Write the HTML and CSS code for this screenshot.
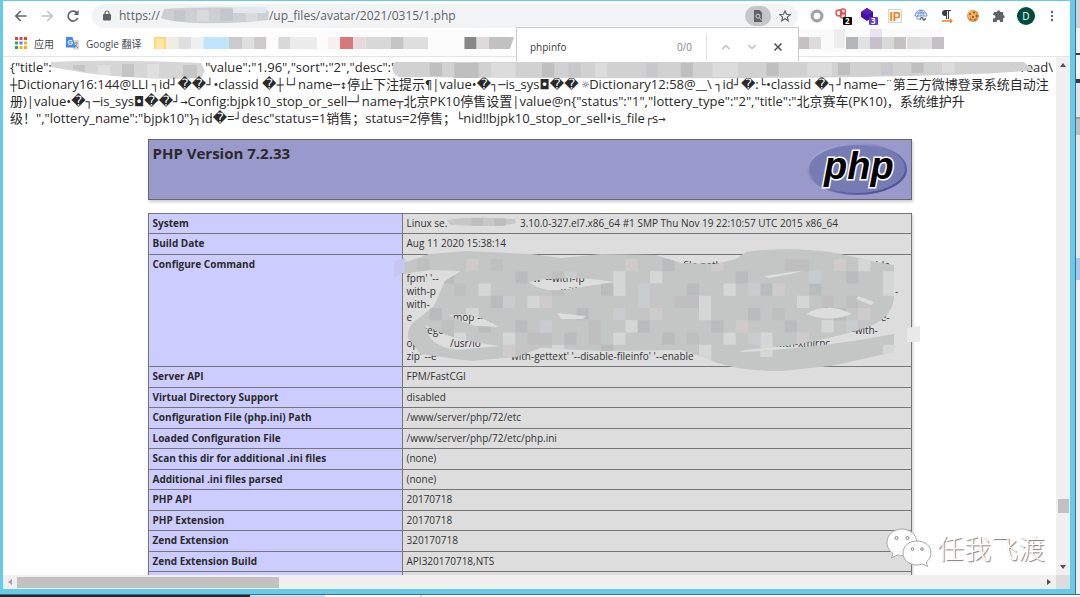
FILE: index.html
```html
<!DOCTYPE html>
<html lang="zh-CN">
<head>
<meta charset="utf-8">
<title>phpinfo()</title>
<link rel="stylesheet" href="styles.css">
</head>
<body>
<div class="desktop">
<div class="window">
  <header class="toolbar">
    <button class="nav" aria-label="后退"><svg width="14" height="14" viewBox="0 0 14 14"><path d="M12.500 7H2M6.800 2L1.800 7l5 5" fill="none" stroke="#5f6368" stroke-width="1.600"/></svg></button>
    <button class="nav" aria-label="前进"><svg width="14" height="14" viewBox="0 0 14 14"><path d="M1.500 7H12M7.200 2l5 5-5 5" fill="none" stroke="#bdc1c6" stroke-width="1.600"/></svg></button>
    <button class="nav" aria-label="重新加载"><svg width="14" height="14" viewBox="0 0 14 14"><path d="M11.700 9A5 5 0 1 1 11 3.900" fill="none" stroke="#5f6368" stroke-width="1.700"/><path d="M12.600 1v5H7.600z" fill="#5f6368"/></svg></button>
    <div class="omnibox">
      <svg class="lock" width="8" height="11" viewBox="0 0 8 11"><path d="M2 5V3a2 2 0 0 1 4 0v2" fill="none" stroke="#5f6368" stroke-width="1.200"/><rect y="4" width="8" height="6.500" rx="1" fill="#5f6368"/></svg>
      <span>https://</span>
      <svg class="host" width="109" height="17" viewBox="0 0 112 17" preserveAspectRatio="none"><path d="M4 2Q40-1 106 1l6 4-1 8Q80 17 38 16 12 15 1 11z" fill="#cdd0d3"/><path d="M14 3h12v11H14zM62 2h13v12H62z" fill="#c4c7ca"/><path d="M38 3h12v11H38zM88 2h12v12H88z" fill="#d8dadc"/><path d="M75 0h34v6H75z" fill="#dfe8ee"/></svg>
      <span>/up_files/avatar/2021/0315/1.php</span>
      <button class="finder" aria-label="在页面中查找"><svg width="12" height="12" viewBox="0 0 12 12"><path d="M2 0h5.500L10 2.500V12H2z" fill="#5f6368"/><circle cx="6" cy="6.200" r="2" fill="none" stroke="#d0d2d4"/><path d="M7.400 7.600L10 10.500" stroke="#d0d2d4"/></svg></button>
      <button class="star" aria-label="收藏"><svg width="12" height="12" viewBox="0 0 12 12"><path d="M6 .9l1.500 3.400 3.700.3-2.800 2.500.8 3.600L6 8.800l-3.200 1.900.8-3.600L.8 4.600l3.700-.3z" fill="none" stroke="#5f6368" stroke-width="1.200"/></svg></button>
    </div>
    <div class="extensions">
      <button aria-label="扩展 1"><svg width="18" height="18" viewBox="0 0 18 18"><circle cx="9" cy="9" r="4.900" fill="#fff" stroke="#a2a2a2" stroke-width="3.200"/></svg></button>
      <button aria-label="扩展 2"><svg width="20" height="18" viewBox="0 0 20 18"><g fill="none" stroke="#d9534f" stroke-width="1.400"><circle cx="6" cy="6" r="3"/><circle cx="10" cy="4.500" r="2.500"/><circle cx="10" cy="8.500" r="2.500"/></g><rect x="10" y="10" width="9" height="8" rx="1" fill="#000"/><text x="12" y="17" class="badge">2</text></svg></button>
      <button aria-label="扩展 3"><svg width="20" height="18" viewBox="0 0 20 18"><path d="M8 1l6 4v5l-6 4-6-4V5z" fill="#4410a6"/><path d="M2 5l6 3 6-3-6-4z" fill="#5920bf"/><rect x="10" y="10" width="9" height="8" rx="1" fill="#6837bd"/><text x="12" y="17" class="badge">3</text></svg></button>
      <button aria-label="扩展 4"><svg width="16" height="16" viewBox="0 0 16 16"><rect x="1.500" y="1.500" width="13" height="13" fill="#fafafa" stroke="#d6d6d6"/><text x="2.500" y="12.500" class="ip">IP</text></svg></button>
      <button aria-label="扩展 5"><svg width="16" height="16" viewBox="0 0 16 16"><g fill="none" stroke="#6b8fdb"><path d="M2 8a6 6 0 0 1 12 0zM5 8C5 6 6 4 8 2c2 2 3 4 3 6M3 5h10M8 2v6M4 8v3h2"/><path d="M7 12c0-3 3-3 3-1s3 1 2-1" stroke="#60656b" stroke-width="1.400"/></g></svg></button>
      <button aria-label="扩展 6"><svg width="16" height="16" viewBox="0 0 16 16"><path d="M12 2H6a3 3 0 0 0 0 6h1v3h1V3h1v8h1V3h2z" fill="#3c4043"/><path d="M3 13h9" stroke="#f08020" stroke-width="1.500"/><path d="M11 10.500l3 2.500-3 2.500z" fill="#f08020"/></svg></button>
      <button aria-label="扩展 7"><svg width="16" height="16" viewBox="0 0 16 16"><circle cx="8" cy="8" r="6" fill="#dc9542"/><circle cx="7" cy="7" r="4.500" fill="#efb260"/><g fill="#8a4a1e"><circle cx="5" cy="6" r=".9"/><circle cx="9" cy="4.500" r=".9"/><circle cx="11.500" cy="8" r=".9"/><circle cx="8" cy="9" r="1"/><circle cx="5.500" cy="11" r=".8"/><circle cx="10" cy="12" r=".8"/></g></svg></button>
      <button aria-label="扩展程序"><svg width="14" height="14" viewBox="0 0 14 14"><path d="M2 3h3a1.700 1.700 0 1 1 3.400 0H11v3a1.700 1.700 0 1 1 0 3.400V13H8a1.700 1.700 0 1 0-3.200 0H1V9.500a1.800 1.800 0 1 0 0-3.400z" fill="#5f6368"/></svg></button>
      <button class="avatar" aria-label="账户">D</button>
      <button aria-label="菜单"><svg width="4" height="14" viewBox="0 0 4 14" fill="#5f6368"><circle cx="2" cy="3" r="1.200"/><circle cx="2" cy="7" r="1.200"/><circle cx="2" cy="11" r="1.200"/></svg></button>
    </div>
  </header>

  <nav class="bookmarks">
    <a href="#apps"><svg width="12" height="12" viewBox="0 0 12 12"><path d="M0 0h3v3H0zM4.500 0h3v3h-3zM9 0h3v3H9z" fill="#e5443a"/><path d="M0 4.500h3v3H0z" fill="#3ba556"/><path d="M4.500 4.500h3v3h-3z" fill="#4285f4"/><path d="M9 4.500h3v3H9zM4.500 9h3v3h-3zM9 9h3v3H9z" fill="#f5b21b"/><path d="M0 9h3v3H0z" fill="#3ba556"/></svg>应用</a>
    <a href="#translate"><svg width="13" height="13" viewBox="0 0 13 13"><path d="M5 3h8v9.500H7z" fill="#d5d8dc"/><path d="M8 6h4M10 5v1M11 7c-1 2-2 3-3 3M9 8l3 3" stroke="#777c82" fill="none" stroke-width=".8"/><path d="M0 0h6.500l3 10.500H0z" fill="#4486f4"/><text x="1.500" y="7.500" class="g">G</text></svg>Google 翻译</a>
    <svg class="hidden-links" viewBox="0 0 358 26" preserveAspectRatio="none">
      <path d="M105 3Q210-3 352 1v25H260Q170 24 105 15z" fill="#fcfcfc"/>
      <path d="M1 7h12v12H1z" fill="#f9d978"/><path d="M3 9h8v10H3z" fill="#fce8a1"/><path d="M13 7h12v12H13z" fill="#f0eee3"/><path d="M25 7h13v12H25zM88 7h12v12H88z" fill="#e0dfdf"/><path d="M38 7h12v12H38z" fill="#edf1f2"/><path d="M50 7h25v12H50z" fill="#c0e4fc"/><path d="M75 7h13v12H75zM100 7h12v12h-12z" fill="#cccaca"/><path d="M124 7h12v12h-12zM210 7h25v12h-25z" fill="#d8d8d8"/><path d="M136 7h26v12h-26z" fill="#ececec"/><path d="M173 7h12v12h-12z" fill="#f9efef"/><path d="M185 7h13v12h-13z" fill="#d7777a"/><path d="M198 7h12v12h-12z" fill="#e7d9da"/><path d="M235 7h13v12h-13z" fill="#c6c5c6"/><path d="M248 7h24v12h-24z" fill="#dedede"/><path d="M308 7h12v12h-12z" fill="#878787"/><path d="M320 7h12v12h-12z" fill="#ded9db"/><path d="M332 7h25l-4 12h-21z" fill="#c1c1c1"/>
    </svg>
    <svg class="hidden-links-end" viewBox="0 0 258 28" preserveAspectRatio="none">
      <path d="M0 0h160v18Q140 24 100 23 40 24 1 20z" fill="#fafafa"/><path d="M52 0h11v19H52z" fill="#ededed"/><path d="M88 0h12v19H88z" fill="#e9e2f2"/><path d="M15 8h12v12H15zM112 8h12v12h-12z" fill="#c5c1c3"/><path d="M27 8h12v12H27zM125 8h13v12h-13z" fill="#dcdcdf"/><path d="M64 8h12v12H64z" fill="#b4b5b8"/><path d="M76 8h12v12H76zM138 8h12v12h-12z" fill="#e2e1e1"/><path d="M88 8h12v12H88z" fill="#c5c1ca"/><path d="M100 8h12v12h-12z" fill="#d9d9d9"/><path d="M150 8h12v12h-12z" fill="#c4c1c4"/>
    </svg>
  </nav>

  <form class="findbar">
    <input type="text" value="phpinfo" aria-label="查找">
    <span class="count">0/0</span>
    <button type="button" aria-label="上一个"><svg width="8" height="6" viewBox="0 0 8 6"><path d="M.5 5L4 1.500 7.500 5" fill="none" stroke="#b8babd" stroke-width="1.300"/></svg></button>
    <button type="button" aria-label="下一个"><svg width="8" height="6" viewBox="0 0 8 6"><path d="M.5 1L4 4.500 7.500 1" fill="none" stroke="#b8babd" stroke-width="1.300"/></svg></button>
    <button type="button" aria-label="关闭"><svg width="8" height="8" viewBox="0 0 8 8"><path d="M.5.5l7 7M7.500.5l-7 7" stroke="#4a4d51" stroke-width="1.500"/></svg></button>
  </form>

  <main class="viewport">
    <div class="page">
      <div class="dump">
        <p><span>{"title":&nbsp;</span><svg class="smear-a" width="154" height="22" viewBox="0 0 154 22"><path d="M0 3Q60 0 150 4l4 8-4 7Q100 22 35 14L0 8z" fill="#d6d6d6"/><path d="M22 6h12v7l-12-3zM71 5h12v13H71zM132 6h14v13h-14z" fill="#c5c5c5"/><path d="M47 6h12v10H47zM96 5h12v14H96z" fill="#e0e0e0"/></svg><span>"value":"1.96","sort":"2","desc":"</span><svg class="smear-b" height="22" viewBox="0 0 652 22" preserveAspectRatio="none"><path d="M4 3H620l10 8-20 2Q470 22 8 18Q-3 12 4 3z" fill="#d1d1d1"/><path d="M38 4h12v13H38zM62 4h24v15H62zM148 4h12v14h-12zM284 4h12v14h-12zM368 4h12v13h-12zM438 4h12v12h-12zM510 4h12v10h-12z" fill="#bfbfc0"/><path d="M98 4h24v14H98zM200 4h12v14h-12zM315 4h25v14h-25zM408 4h24v13h-24zM540 4h12v10h-12z" fill="#dcdcdc"/><path d="M174 4h12v14h-12zM250 4h12v14h-12zM480 4h12v12h-12z" fill="#c8c8ca"/></svg><span class="tail">read\</span></p>
        <p><i>┼</i>Dictionary16:144@LLI <i>┐</i>id<i>┘</i><b>��</b><i>┘</i>•classid <b>�</b><i>┼└┘</i>name<i>─↕</i>停止下注提示<i>¶</i>|value•<b>�</b><i>┐─</i>is_sys<b class="inv">◘</b><b>��</b> <i>☼</i>Dictionary12:58@__\ <i>┐</i>id<i>┘</i><b>�</b>:<i>└</i>•classid <b>�</b><i>┐┘</i>name<i>─</i>¨第三方微博登录系统自动注</p>
        <p>册)|value•<b>�</b><i>┐─</i>is_sys<b class="inv">◘</b><b>��</b><i>┘→</i>Config:bjpk10_stop_or_sell<i>─┘</i>name<i>┬</i>北京PK10停售设置|value@n{"status":"1","lottery_type":"2","title":"北京赛车(PK10)，系统维护升</p>
        <p>级！","lottery_name":"bjpk10"}<i>┐</i>id<b>�</b>=<i>┘</i>desc"status=1销售；status=2停售；<i>└</i>nid‼bjpk10_stop_or_sell•is_file<i>┌</i>s<i>→</i></p>
      </div>

      <section class="banner">
        <h1>PHP Version 7.2.33</h1>
        <svg width="102" height="56" viewBox="0 0 102 56" role="img" aria-label="PHP logo">
          <defs><linearGradient id="rim" x1="0" y1="0" x2="1" y2="1"><stop offset="0" stop-color="#b0b3dc"/><stop offset=".5" stop-color="#7478b4"/><stop offset="1" stop-color="#3e4189"/></linearGradient></defs>
          <ellipse cx="51" cy="27" rx="49" ry="25" fill="#777bb4" stroke="url(#rim)" stroke-width="2"/>
          <text x="18" y="37" class="php">php</text>
        </svg>
      </section>

      <table class="info">
        <tr><th scope="row">System</th><td>Linux se.<svg class="server" width="70" height="10" viewBox="0 0 74 10"><path d="M0 3Q20-1 50 1l22 1 1 4Q60 10 30 9L3 8z" fill="#c7c7c7"/><path d="M26 1h12v8H26zM50 1h12v8H50z" fill="#bdbdbd"/></svg> 3.10.0-327.el7.x86_64 #1 SMP Thu Nov 19 22:10:57 UTC 2015 x86_64</td></tr>
        <tr><th scope="row">Build Date</th><td>Aug 11 2020 15:38:14</td></tr>
        <tr><th scope="row">Configure Command</th><td class="command">&nbsp;<br>fpm' '--<br>with-p<br>with-<br>e<br>&nbsp;<br>op<br>zip' --e
          <svg class="redaction" width="530" height="120" viewBox="0 0 530 120">
            <g class="scrap">
              <text x="292" y="20">file-path</text><text x="479" y="20">able-</text><text x="142" y="33">w '--with-fp</text><text x="170" y="46">with</text><text x="62" y="72">mop --</text><text x="32" y="85">rege..</text><text x="59" y="98">/usr/lo</text><text x="120" y="111">with-gettext' '--disable-fileinfo' '--enable</text><text x="417" y="59">able</text><text x="481" y="72">ble-</text><text x="455" y="85">'--with-</text><text x="357" y="98">ists '--with-xmlrpc</text><text x="504" y="46">-</text>
            </g>
            <defs><clipPath id="scribble"><path clip-rule="evenodd" d="M12 14L38 5 75 2 140 5 170 9 210 5 265 6 290 14 325 15 345 10 355 3Q400-3 445 4L490 14 503 16 503 50Q500 72 470 80 430 93 384 98 345 101 350 103 430 99 503 85V103L440 117 390 122Q340 122 315 109L290 101 210 102 150 99 125 108 80 112 30 105 17 89Q16 76 27 70L43 57 54 32 70 22 38 21 12 25zM138 33Q175 25 223 33L185 39Q153 46 138 33zM57 66Q85 62 108 78L83 77zM35 76Q55 90 109 97L65 101Q35 96 35 76zM166 64L195 67 192 70 170 70zM415 65Q436 52 461 65 440 74 415 65zM373 27L415 21 400 25 378 29zM467 47L483 53 480 56 465 50z"/></clipPath></defs>
            <g clip-path="url(#scribble)">
              <rect width="530" height="125" fill="#c4c5c5"/>
              <g transform="translate(14 10) scale(12.250)">
                <path fill="#d5d6d6" d="M5 4h1v1H5zM10 3h1v1h-1zM17 1h1v2h-1zM20 1h1v1h-1zM24 3h1v2h-1zM26 2h1v1h-1zM32 3h1v1h-1zM37 0h1v1h-1zM4 6h1v1H4zM8 6h1v1H8zM18 5h1v1h-1zM26 6h1v1h-1zM12 7h1v1h-1zM29 6h1v2h-1zM34 5h1v1h-1zM39 1h2v2h-2zM6 2h1v1H6zM17 6h1v1h-1zM24 7h1v2h-1zM39 7h2v1h-2z"/>
                <path fill="#b9bcbd" d="M3 1h1v1H3zM9 1h1v1H9zM16 2h1v1h-1zM14 4h1v1h-1zM21 0h1v1h-1zM23 2h1v1h-1zM27 1h1v1h-1zM29 2h1v1h-1zM33 2h1v1h-1zM36 1h1v1h-1zM28 4h1v1h-1zM6 5h1v1H6zM9 5h1v1H9zM13 6h1v1h-1zM19 5h1v1h-1zM21 6h1v1h-1zM25 5h1v1h-1zM31 5h1v1h-1zM35 4h1v1h-1zM7 3h1v1H7zM2 4h1v1H2zM16 7h1v1h-1z"/>
                <path fill="#cfcbca" d="M5 0h1v1H5zM11 3h1v1h-1zM18 0h1v1h-1zM25 0h1v1h-1zM30 2h1v1h-1zM35 0h1v1h-1zM37 4h1v1h-1zM8 7h1v1H8zM20 4h1v1h-1zM27 5h1v1h-1zM32 6h1v1h-1z"/>
                <path fill="#bfbfbf" d="M1 0h1v1H1zM4 2h1v1H4zM7 0h1v1H7zM12 1h1v2h-1zM22 3h2v1h-2zM31 0h2v1h-2zM34 3h1v1h-1zM15 5h1v2h-1zM10 6h2v1h-2zM3 5h1v2H3zM30 4h1v1h-1zM23 6h1v1h-1zM36 3h1v1h-1z"/>
                <path fill="#c8cccf" d="M19 2h1v2h-1zM28 2h1v1h-1zM13 1h1v1h-1zM11 5h1v1h-1zM28 6h1v1h-1zM36 5h1v1h-1zM8 3h1v1H8zM17 4h1v1h-1zM33 1h1v1h-1z"/>
              </g>
            </g>
            <path d="M3 12L14 9v14L3 28z" fill="#c8c6ef"/><path d="M516 79l13-2v16h-13z" fill="#e9e9e9"/>
          </svg></td></tr>
        <tr><th scope="row">Server API</th><td>FPM/FastCGI</td></tr>
        <tr><th scope="row">Virtual Directory Support</th><td>disabled</td></tr>
        <tr><th scope="row">Configuration File (php.ini) Path</th><td>/www/server/php/72/etc</td></tr>
        <tr><th scope="row">Loaded Configuration File</th><td>/www/server/php/72/etc/php.ini</td></tr>
        <tr><th scope="row">Scan this dir for additional .ini files</th><td>(none)</td></tr>
        <tr><th scope="row">Additional .ini files parsed</th><td>(none)</td></tr>
        <tr><th scope="row">PHP API</th><td>20170718</td></tr>
        <tr><th scope="row">PHP Extension</th><td>20170718</td></tr>
        <tr><th scope="row">Zend Extension</th><td>320170718</td></tr>
        <tr><th scope="row">Zend Extension Build</th><td>API320170718,NTS</td></tr>
        <tr><th scope="row"></th><td></td></tr>
      </table>
    </div>
    <div class="vscroll"><svg width="6" height="4" viewBox="0 0 6 4"><path d="M0 4l3-4 3 4z" fill="#505050"/></svg><span></span><svg width="6" height="4" viewBox="0 0 6 4"><path d="M0 0h6L3 4z" fill="#505050"/></svg></div>
    <div class="hscroll"><svg width="4" height="6" viewBox="0 0 4 6"><path d="M4 0v6L0 3z" fill="#a3a3a3"/></svg><span></span><svg width="4" height="6" viewBox="0 0 4 6"><path d="M0 0v6l4-3z" fill="#505050"/></svg></div>
    <div class="corner"></div>
  </main>

  <div class="watermark">
    <svg width="46" height="40" viewBox="0 0 46 40"><g fill="#fff" fill-opacity=".92" stroke="#a8a8a8" stroke-width="1"><path d="M16 1C7.500 1 1 7 1 14.500c0 5 2.500 8.500 6 11L5.500 30l6-3c2 .6 4 .8 6 .6C31 27 31 18 31 14 30 6 24 1 16 1z"/><path d="M31 13c-8 0-14 5-14 12s6 12 14 12c2 0 4-.4 5.500-1l5 2.500-1.200-4.500c2.700-2 4.700-5 4.700-9 0-7-6-12-14-12z"/></g><g fill="#fff" stroke="#888"><circle cx="10.500" cy="10" r="1.500"/><circle cx="21.500" cy="10" r="1.500"/><circle cx="26.500" cy="21" r="1.300"/><circle cx="36" cy="21" r="1.300"/></g></svg>
    <span>任我飞渡</span>
  </div>
</div>
<div class="behind-right"></div>
<div class="behind-bottom"></div>
</div>
</body>
</html>
```

FILE: styles.css
```css
* { box-sizing: border-box; }

body {
  margin: 0;
  font-family: "Open Sans", "Noto Sans CJK SC", sans-serif;
  color: #2a2a2a;
  background: #fff;
}

button {
  display: flex;
  align-items: center;
  justify-content: center;
  padding: 0;
  border: 0;
  background: none;
  font: inherit;
}

svg { display: block; flex: none; }

.desktop {
  display: grid;
  grid-template-columns: 1fr 5px;
  grid-template-rows: 1fr 3px;
  height: 100vh;
  overflow: hidden;
}

.window {
  position: relative;
  display: flex;
  flex-direction: column;
  min-width: 0;
  min-height: 0;
  border: solid #66cbea;
  border-width: 1px 5px 5px 3px;
}

.behind-right {
  border-left: 1px solid #4a6b86;
  background: linear-gradient(#d4d2dc 0 28px, #f2f1f8 28px 53px, #35365a 53px 55px, #f6f6fa 55px 79px, #35365a 79px 83px, #e4e4ec 83px 117px, #9a9aa8 117px 119px, #bcc2cc 119px 135px, #e8e8ef 135px 258px, #a8c9e8 258px 280px, #eeeef4 280px);
}

.behind-bottom {
  grid-column: 1 / -1;
  border-top: 1px solid #3f7186;
  background: linear-gradient(90deg, #252525 0 250px, #cfdde4 250px 325px, #fff 325px 420px, #d8d8d8 420px 422px, #f8f8f8 422px);
}

/* Toolbar */
.toolbar {
  display: flex;
  align-items: center;
  height: 29px;
  padding: 0 5px;
}

.nav { width: 26px; height: 26px; }

.omnibox {
  display: flex;
  flex: 1;
  align-items: center;
  height: 24px;
  margin-left: 6px;
  padding-left: 11px;
  border-radius: 12px;
  background: #f1f3f4;
  color: #5f6368;
  font-size: 12px;
}

.lock { margin-right: 8px; }

.finder {
  width: 26px;
  height: 20px;
  margin-left: auto;
  border-radius: 10px;
  background: #c4c6c8;
}

.star { width: 27px; }

.extensions {
  display: flex;
  align-items: center;
  margin-left: 6px;
}

.extensions button { width: 26px; height: 26px; }

.extensions .avatar {
  width: 18px;
  height: 18px;
  margin: 0 4px 0 5px;
  border-radius: 50%;
  background: #004d40;
  color: #fff;
  font-size: 10px;
}

.badge { fill: #fff; font: bold 8px "Open Sans", sans-serif; }
.ip { fill: #f58220; font: bold 12px "Liberation Sans", sans-serif; }
.g { fill: #fff; font: bold 7px "Liberation Sans", sans-serif; }

/* Bookmarks */
.bookmarks {
  display: flex;
  align-items: center;
  height: 27px;
  padding: 0 30px 0 12px;
  border-bottom: 1px solid #e3e4e6;
}

.bookmarks a {
  display: flex;
  align-items: center;
  gap: 7px;
  margin-right: 12px;
  color: #46494d;
  font-size: 10px;
  text-decoration: none;
  white-space: nowrap;
}

.hidden-links { width: 362px; height: 26px; }
.hidden-links-end { width: 258px; height: 28px; margin-left: auto; }

/* Find bar */
.findbar {
  position: absolute;
  top: 26px;
  right: 271px;
  display: flex;
  align-items: center;
  width: 283px;
  height: 34px;
  padding: 4px 7px 0 13px;
  border: 1px solid #c9cbcd;
  border-bottom: 0;
  background: #fff;
}

.findbar input {
  flex: 1;
  min-width: 0;
  padding: 0;
  border: 0;
  outline: 0;
  color: #3c4043;
  font: 10px "Open Sans", sans-serif;
}

.findbar .count {
  padding-right: 14px;
  border-right: 1px solid #e3e4e6;
  color: #80868b;
  font-size: 10px;
  line-height: 26px;
}

.findbar button { width: 26px; height: 26px; }
.count + button { margin-left: 6px; }

/* Viewport */
.viewport {
  display: grid;
  flex: 1;
  grid-template-columns: 1fr 14px;
  grid-template-rows: 1fr 14px;
  min-height: 0;
}

.page {
  min-width: 0;
  min-height: 0;
  overflow: hidden;
}

.dump {
  padding: 2px 3px 0 7px;
  font-size: 13px;
  line-height: 17px;
  white-space: nowrap;
}

.dump p { height: 17px; margin: 0; }
.dump p:first-child { display: flex; }
.dump i { font: 12px/16px "DejaVu Sans Mono", monospace; }
.dump b { font: 14px/16px "DejaVu Sans", sans-serif; }
.dump .inv { font-size: 13px; }

.smear-a { margin-left: -4px; }
.smear-b { position: relative; flex: 1; min-width: 0; margin-left: -5px; }
.tail { margin-left: -36px; }

.banner {
  display: flex;
  justify-content: space-between;
  max-width: 764px;
  height: 61px;
  margin: 12px auto 13px;
  padding: 2px 3px 2px 4px;
  border: 1px solid #66666f;
  background: #9999cc;
  box-shadow: 1px 2px 3px #ccc;
}

.banner h1 {
  margin: 0;
  font-size: 15px;
  line-height: 22px;
}

.php {
  fill: #000;
  stroke: #fff;
  stroke-width: 3px;
  paint-order: stroke;
  font: italic bold 38px "Liberation Sans", sans-serif;
}

.info {
  width: 100%;
  max-width: 764px;
  margin: 0 auto;
  border-collapse: collapse;
  table-layout: fixed;
  box-shadow: 1px 2px 3px #ccc;
  font-size: 10px;
  line-height: 13px;
}

.info th,
.info td {
  height: 20px;
  padding: 3px 4px;
  border: 1px solid #77777a;
  text-align: left;
  vertical-align: top;
}

.info tr:nth-child(even) > * { height: 21px; }

.info th { width: 254px; background: #ccccff; }
.info td { background: #dddddd; color: #333; }
.server { display: inline-block; }

.info .command { position: relative; padding: 4px 4px 3px; }
.redaction { position: absolute; top: -6px; left: -12px; overflow: visible; }
.scrap { fill: #333; font-size: 10px; }

/* Scrollbars */
.vscroll,
.hscroll {
  display: flex;
  align-items: center;
  justify-content: space-between;
  background: #f0f0f0;
}

.vscroll { flex-direction: column; padding: 6px 0; }
.vscroll span { width: 11px; height: 14px; margin-top: auto; margin-bottom: 52px; background: #c1c1c1; }
.hscroll { padding: 0 5px; }
.hscroll span { width: 262px; height: 11px; margin-right: auto; margin-left: 5px; background: #c1c1c1; }
.corner { background: #dcdcdc; }

/* Watermark */
.watermark {
  position: absolute;
  right: 25px;
  bottom: 21px;
  display: flex;
  align-items: center;
  gap: 5px;
  color: #fff;
  font: 300 27px/40px "Noto Sans CJK SC", sans-serif;
  text-shadow: 1px 1px 1px #777;
}
```
